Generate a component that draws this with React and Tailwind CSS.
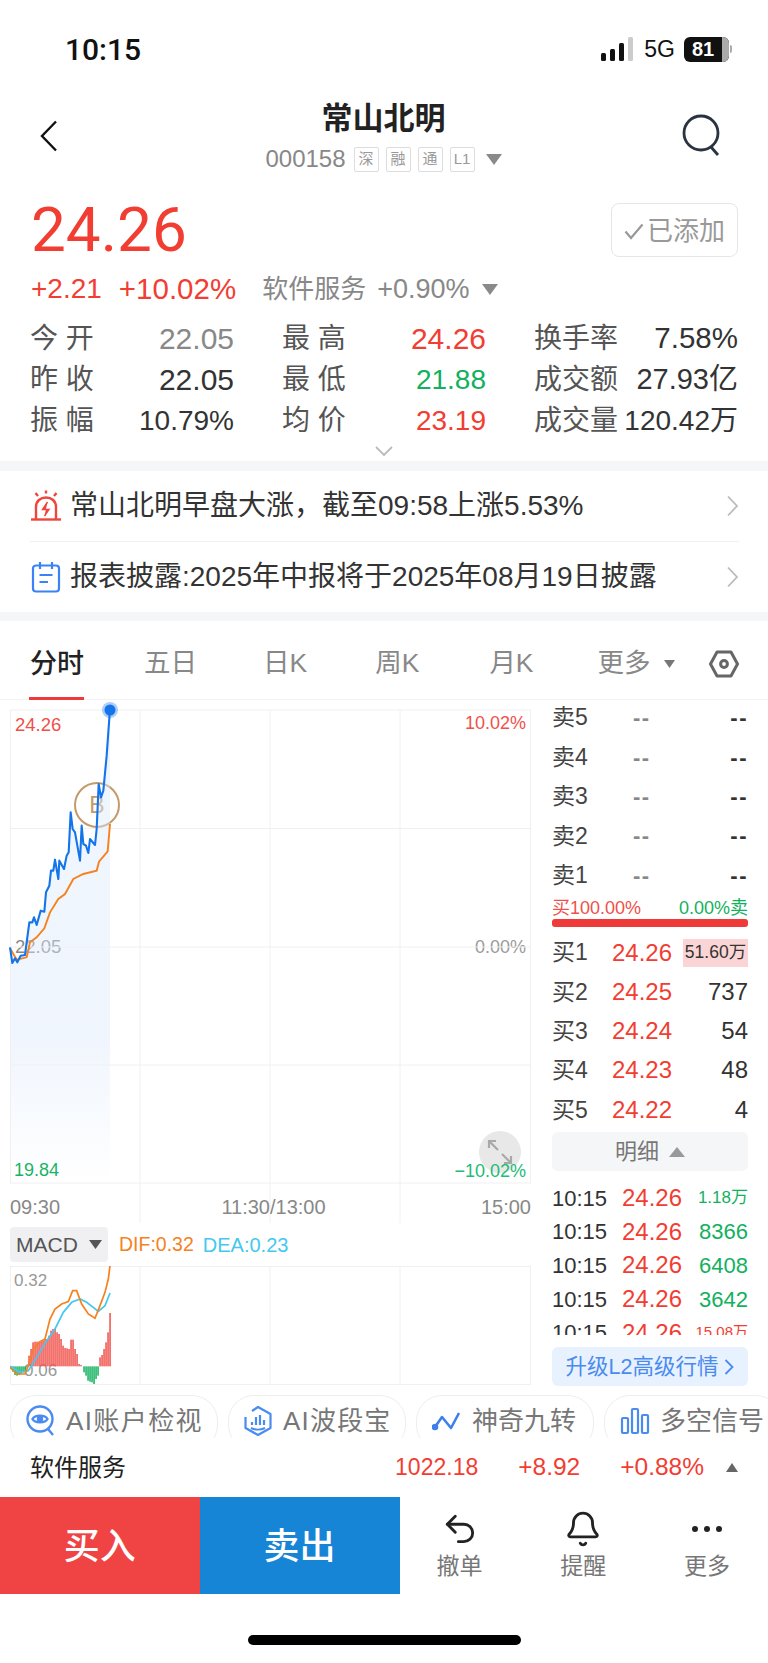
import { Undo2, Bell } from "lucide-react";

const RED = "text-[#f23d32]";
const GREEN = "text-[#12b15e]";

// chart points, read off the reference at 3x
const toPoints = (list, top) => list.map(([x, y]) => `${x / 3},${top + y / 3}`).join(" ");

const priceLine = [
    [30, 775], [37, 822], [45, 808], [52, 820], [62, 800], [75, 798], [88, 700], [97, 700], [102, 685], [110, 708],
    [122, 665], [133, 668], [138, 610], [148, 590], [153, 545], [160, 545], [165, 512], [175, 570], [178, 515],
    [192, 540], [200, 500], [206, 490], [212, 370], [218, 420], [225, 430], [240, 515], [245, 410], [250, 465],
    [258, 470], [265, 492], [270, 450], [285, 468], [290, 420], [296, 285], [303, 325], [310, 305], [320, 200], [330, 60],
];
const avgLine = [
    [30, 778], [50, 812], [80, 805], [90, 760], [110, 745], [133, 718], [150, 670], [175, 630], [195, 615],
    [220, 570], [250, 555], [290, 545], [297, 518], [323, 487], [330, 405],
];
const difLine = [
    [30, 655], [50, 675], [75, 675], [85, 650], [100, 600], [120, 578], [135, 570], [150, 510], [165, 480], [185, 465],
    [205, 458], [218, 425], [230, 425], [245, 465], [265, 495], [285, 508], [300, 470], [315, 430], [325, 390], [330, 350],
];
const deaLine = [
    [30, 652], [60, 670], [85, 665], [110, 625], [140, 575], [165, 540], [190, 490], [215, 460], [240, 450],
    [260, 460], [295, 487], [315, 470], [330, 432],
];
const macdBars = [
    [33, 660], [39, 668], [45, 678], [51, 680], [57, 678], [63, 675], [69, 670], [75, 665], [81, 655],
    [87, 620], [93, 600], [99, 580], [105, 578], [111, 578], [117, 578], [123, 578], [129, 575], [135, 570], [141, 570],
    [147, 560], [153, 545], [159, 540], [165, 538], [171, 550], [177, 555], [183, 570], [189, 590], [195, 597],
    [201, 598], [207, 600], [213, 572], [219, 572], [225, 600], [231, 615], [237, 645], [243, 648],
    [252, 670], [258, 680], [264, 695], [270, 698], [276, 700], [282, 705], [288, 690], [294, 680],
    [300, 625], [306, 618], [312, 600], [318, 580], [324, 550], [330, 492],
];

const stats = [
    ["今 开", "22.05", "text-[#888] text-[30px]"],
    ["最 高", "24.26", `${RED} text-[30px]`],
    ["换手率", "7.58%", "text-[#333] text-[29.5px]"],
    ["昨 收", "22.05", "text-[#333] text-[30px]"],
    ["最 低", "21.88", `${GREEN} text-[28px]`],
    ["成交额", "27.93亿", "text-[#333] text-[29px]"],
    ["振 幅", "10.79%", "text-[#333] text-[28px]"],
    ["均 价", "23.19", `${RED} text-[28px]`],
    ["成交量", "120.42万", "text-[#333] text-[28px]"],
];

const tabs = [
    { name: "五日", cls: "ml-[60px]" },
    { name: "日K", cls: "ml-[66px]" },
    { name: "周K", cls: "ml-[68px]" },
    { name: "月K", cls: "ml-[70px]" },
    { name: "更多", cls: "ml-[64px]" },
];

const sells = ["卖5", "卖4", "卖3", "卖2", "卖1"];
const buys = [
    ["买1", "24.26", "51.60万"],
    ["买2", "24.25", "737"],
    ["买3", "24.24", "54"],
    ["买4", "24.23", "48"],
    ["买5", "24.22", "4"],
];
const trades = [
    ["1.18万", GREEN, "text-[17px]"],
    ["8366", GREEN, "text-[22px]"],
    ["6408", GREEN, "text-[22px]"],
    ["3642", GREEN, "text-[22px]"],
    ["15.08万", RED, "text-[15px]"],
];

const ChevronRight = () => (
    <svg width="13" height="22" viewBox="0 0 13 22" fill="none" stroke="#bbb" strokeWidth="1.8">
        <path d="M2 1.5 L11 11 L2 20.5" />
    </svg>
);

const AlarmIcon = () => (
    <svg width="32" height="32" viewBox="0 0 32 32" fill="none" stroke="#f0453c" strokeWidth="2.4" className="shrink-0">
        <path d="M1 29.5 H31" />
        <path d="M6 29 V17 C6 11 10.5 7.5 16 7.5 C21.5 7.5 26 11 26 17 V29" />
        <path d="M17.5 12 L12.5 19.5 H19 L14.5 26" fill="#f0453c" strokeWidth="1.4" />
        <path d="M16 0.5 V3.5 M5.5 3 L8 6 M26.5 3 L24 6" />
    </svg>
);

const NoteIcon = () => (
    <svg width="32" height="32" viewBox="0 0 32 32" fill="none" stroke="#3b82f6" strokeWidth="2.2" className="shrink-0">
        <rect x="3" y="4.5" width="26" height="26" rx="3" />
        <path d="M10 1 V8 M22 1 V8" />
        <path d="M9.5 14 H22.5 M9.5 21 H18" />
    </svg>
);

const HexIcon = () => (
    <svg width="30" height="30" viewBox="0 0 30 30" fill="none" stroke="#666" strokeWidth="3">
        <path d="M8 3 H22 L28.5 15 L22 27 H8 L1.5 15 Z" strokeLinejoin="round" />
        <circle cx="15" cy="15" r="3.4" />
    </svg>
);

const EyeIcon = () => (
    <svg width="30" height="32" viewBox="0 0 30 32" fill="none" stroke="#4a8bf0" strokeWidth="2.4">
        <circle cx="14" cy="14" r="12.5" />
        <path d="M6.5 14 C9 9.5 19 9.5 21.5 14 C19 18.5 9 18.5 6.5 14 Z" />
        <circle cx="14" cy="14" r="2" fill="#4a8bf0" />
        <path d="M22 24 L27 30" />
    </svg>
);

const WaveIcon = () => (
    <svg width="30" height="32" viewBox="0 0 30 32" fill="none" stroke="#4a8bf0" strokeWidth="2.2">
        <path d="M9 6 L15 2 L27.5 9 V23 L15 30 L2.5 23 V12" strokeLinejoin="round" />
        <path d="M9 20 V17 M13 20 V12 M17 20 V10 M21 20 V15" />
        <path d="M8 23 C12 25 18 25 22 23" />
    </svg>
);

const TurnIcon = () => (
    <svg width="30" height="32" viewBox="0 0 30 32" fill="none" stroke="#3f7fea" strokeWidth="2.6">
        <path d="M3 22 L10 12 L19 23 L27 8" strokeLinejoin="round" />
        <circle cx="3" cy="22" r="2" fill="#3f7fea" />
    </svg>
);

const SignalIcon = () => (
    <svg width="30" height="32" viewBox="0 0 30 32" fill="none" stroke="#4a8bf0" strokeWidth="2.2">
        <rect x="2" y="13" width="6" height="15" rx="1" />
        <rect x="12" y="4" width="6" height="24" rx="1" />
        <rect x="22" y="10" width="6" height="18" rx="1" />
    </svg>
);

const pills = [
    { icon: EyeIcon, text: "AI账户检视", cls: "w-[208px] pl-[15px]", spacing: "tracking-[1.4px]" },
    { icon: WaveIcon, text: "AI波段宝", cls: "w-[178px] pl-[14px]", spacing: "tracking-[1.2px]" },
    { icon: TurnIcon, text: "神奇九转", cls: "w-[178px] pl-[15px]", spacing: "" },
    { icon: SignalIcon, text: "多空信号", cls: "w-[178px] pl-[15px]", spacing: "" },
];

const TimeChart = () => (
    <div className="relative w-[521px] h-[513px]">
        <span className="absolute left-[5px] top-[5px] text-[18.5px] leading-[20px] text-[#f0504a]">24.26</span>
        <span className="absolute right-[5px] top-[3px] text-[18px] leading-[20px] text-[#f0504a]">10.02%</span>
        <span className="absolute left-[5px] top-[227px] text-[18.5px] leading-[20px] text-[#888]">22.05</span>
        <span className="absolute right-[5px] top-[227px] text-[18px] leading-[20px] text-[#999]">0.00%</span>
        <span className="absolute left-[4px] top-[450px] text-[18px] leading-[20px] text-[#12b15e]">19.84</span>
        <div className="absolute left-[64px] top-[72px] w-[46px] h-[46px] rounded-full border-2 border-[#c49a6c] flex items-center justify-center text-[23px] text-[#c49a6c]">
            B
        </div>
        <svg width="521" height="513" viewBox="10 711 521 513" className="absolute left-0 top-0 overflow-visible">
            <defs>
                <linearGradient id="areaFill" x1="0" y1="0" x2="0" y2="1">
                    <stop offset="0" stopColor="#dce9fc" stopOpacity="0.45" />
                    <stop offset="0.7" stopColor="#dce9fc" stopOpacity="0.42" />
                    <stop offset="1" stopColor="#dce9fc" stopOpacity="0" />
                </linearGradient>
            </defs>
            <path d={`M${toPoints(priceLine, 690).replaceAll(" ", " L")} L110,1184 L10,1184 Z`} fill="url(#areaFill)" />
            {[711, 829.5, 948, 1066, 1184].map((y) => (
                <line key={y} x1="10" x2="531" y1={y} y2={y} stroke="#f0f0f0" />
            ))}
            {[10.5, 140, 270, 400, 530.5].map((x, i) => (
                <line key={x} x1={x} x2={x} y1="711" y2={i === 0 || i === 4 ? 1184 : 1224} stroke="#f0f0f0" />
            ))}
            <polyline points={toPoints(avgLine, 690)} fill="none" stroke="#f5821f" strokeWidth="1.9" />
            <polyline points={toPoints(priceLine, 690)} fill="none" stroke="#1474ea" strokeWidth="2.1" strokeLinejoin="round" />
            <circle cx="110" cy="711" r="8" fill="#1474ea" fillOpacity="0.35" />
            <circle cx="110" cy="711" r="5.5" fill="#1474ea" />
        </svg>
        {/* expand button */}
        <div className="absolute left-[469px] top-[421px] w-[42px] h-[42px] rounded-full bg-[#e8e8e8] flex items-center justify-center">
            <svg width="26" height="26" viewBox="0 0 26 26" fill="none" stroke="#a8a8a8" strokeWidth="2.2">
                <path d="M2 9 V2 H9 M2 2 L11 11 M24 17 V24 H17 M24 24 L15 15" />
            </svg>
        </div>
        <span className="absolute right-[5px] top-[451px] text-[18px] leading-[20px] text-[#22bb77]">−10.02%</span>
        <div className="absolute left-0 right-0 top-[485px] flex justify-between text-[20px] leading-[24px] text-[#888]">
            <span>09:30</span>
            <span className="ml-[6px]">11:30/13:00</span>
            <span>15:00</span>
        </div>
    </div>
);

const MacdChart = () => (
    <div className="relative w-[521px] h-[119px]">
        <span className="absolute left-[4px] top-[5px] text-[17px] leading-[20px] text-[#999]">0.32</span>
        <span className="absolute left-[14px] top-[95px] text-[17px] leading-[20px] text-[#999]">0.06</span>
        <svg width="521" height="119" viewBox="10 1267 521 119" className="absolute left-0 top-0 overflow-hidden">
            {[1267.5, 1385.5].map((y) => (
                <line key={y} x1="10" x2="531" y1={y} y2={y} stroke="#f0f0f0" />
            ))}
            {[10.5, 140, 270, 400, 530.5].map((x) => (
                <line key={x} x1={x} x2={x} y1="1267" y2="1386" stroke="#f0f0f0" />
            ))}
            {macdBars.map(([x, y]) => {
                const up = y < 652;
                const top = 1150 + Math.min(y, 652) / 3;
                const h = Math.abs(y - 652) / 3;
                return <rect key={x} x={x / 3 - 0.7} y={top} width="1.5" height={h} fill={up ? "#f0504a" : "#12b15e"} />;
            })}
            <polyline points={toPoints(deaLine, 1150)} fill="none" stroke="#45c8f0" strokeWidth="1.7" />
            <polyline points={toPoints(difLine, 1150)} fill="none" stroke="#f5821f" strokeWidth="1.7" />
        </svg>
    </div>
);

const OrderBook = () => (
    <div className="w-[196px] ml-[21px] -mt-[2px] self-start flex flex-col">
        {sells.map((label) => (
            <div key={label} className="h-[39.4px] flex items-center justify-between text-[23px] text-[#444]">
                <span className="w-[60px]">{label}</span>
                <span className="flex-1 pl-[21px] text-[#888] text-[22px] font-bold tracking-[1.5px]">--</span>
                <span className="text-[22px] font-bold text-[#333] tracking-[1.5px]">--</span>
            </div>
        ))}
        <div className="h-[20px] mt-[3px] flex items-center justify-between text-[18px] leading-[20px]">
            <span className="text-[#f0504a]">买100.00%</span>
            <span className={GREEN}>0.00%卖</span>
        </div>
        <div className="h-[8px] mt-[1px] rounded-[3px] bg-[#ee3a38]" />
        <div className="h-[6px]" />
        {buys.map(([label, price, qty], i) => (
            <div key={label} className="h-[39.3px] flex items-center text-[#444]">
                <span className="w-[60px] text-[23px]">{label}</span>
                <span className={`text-[24px] ${RED}`}>{price}</span>
                {i === 0 ? (
                    <span className="ml-auto w-[65px] h-[28px] flex items-center justify-center bg-[#fbd5d5] text-[17.5px] text-[#333]">
                        {qty}
                    </span>
                ) : (
                    <span className="ml-auto text-[24px] text-[#333]">{qty}</span>
                )}
            </div>
        ))}
        <div className="h-[39px] mt-[3px] rounded-[6px] bg-[#f5f6f8] flex items-center justify-center gap-[10px] text-[22px] text-[#777]">
            明细
            <svg width="16" height="10" viewBox="0 0 16 10" fill="#999">
                <path d="M8 0 L16 10 H0 Z" />
            </svg>
        </div>
        <div className="h-[154px] mt-[10px] overflow-hidden flex flex-col">
            {trades.map(([qty, color, size], i) => (
                <div key={i} className="h-[33.6px] shrink-0 flex items-center">
                    <span className="w-[70px] text-[22px] text-[#333]">10:15</span>
                    <span className={`text-[24px] ${RED}`}>24.26</span>
                    <span className={`ml-auto ${size} ${color}`}>{qty}</span>
                </div>
            ))}
        </div>
        <div className="h-[39px] mt-[12px] rounded-[6px] bg-[#e8f1fe] flex items-center justify-center gap-[6px] text-[21.5px] text-[#4a8bf0]">
            升级L2高级行情
            <svg width="10" height="16" viewBox="0 0 10 16" fill="none" stroke="#4a8bf0" strokeWidth="1.8">
                <path d="M1.5 1 L8.5 8 L1.5 15" />
            </svg>
        </div>
    </div>
);

const App = () => {
    return (
        <div className="w-[768px] h-[1663px] overflow-hidden bg-white [font-family:'Liberation_Sans','Noto_Sans_CJK_SC',sans-serif]">
            {/* Status bar */}
            <div className="h-[98px] pl-[65px] pr-[36px] flex items-center justify-between">
                <span className="text-[30px] font-medium text-[#111] [font-family:Roboto,sans-serif]">10:15</span>
                <div className="flex items-center gap-[9px]">
                    <svg width="34" height="24" viewBox="0 0 34 24">
                        <rect x="0" y="16" width="5" height="8" rx="1.5" fill="#111" />
                        <rect x="9" y="12" width="5" height="12" rx="1.5" fill="#111" />
                        <rect x="18" y="6" width="5" height="18" rx="1.5" fill="#111" />
                        <rect x="27" y="0" width="5" height="24" rx="1.5" fill="#ccc" />
                    </svg>
                    <span className="text-[23px] font-medium text-[#111]">5G</span>
                    <div className="flex items-center gap-[1px]">
                        <div className="relative flex items-center w-[45px] h-[25px] rounded-[6px] bg-[#111] overflow-hidden">
                            <span className="pl-[8px] text-[20px] font-bold leading-none text-white">81</span>
                            <div className="absolute right-0 top-0 h-full w-[7px] bg-[#aaa]" />
                        </div>
                        <div className="w-[2px] h-[8px] rounded-r-[2px] bg-[#aaa]" />
                    </div>
                </div>
            </div>

            {/* Nav */}
            <div className="h-[86px] pl-[40px] pr-[41px] grid grid-cols-[1fr_auto_1fr] items-start">
                <svg width="18" height="32" viewBox="0 0 18 32" fill="none" stroke="#111" strokeWidth="2.4" className="mt-[22px]">
                    <path d="M16 1.5 L2 16 L16 30.5" />
                </svg>
                <div className="flex flex-col items-center">
                    <span className="h-[40px] leading-[42px] text-[31px] font-bold text-[#222]">常山北明</span>
                    <div className="h-[42px] flex items-center text-[#888]">
                        <span className="text-[24px] mr-[8px]">000158</span>
                        {["深", "融", "通", "L1"].map((tag) => (
                            <span
                                key={tag}
                                className="w-[25px] h-[25px] mr-[7px] flex items-center justify-center rounded-[2px] border border-[#ddd] text-[15px] text-[#999]"
                            >
                                {tag}
                            </span>
                        ))}
                        <svg width="16" height="11" viewBox="0 0 16 11" fill="#8a8a8a" className="ml-[4px]">
                            <path d="M0 0 H16 L8 11 Z" />
                        </svg>
                    </div>
                </div>
                <svg width="40" height="42" viewBox="0 0 40 42" fill="none" stroke="#2a3340" strokeWidth="2.8" className="mt-[16px] mr-[6px] justify-self-end">
                    <circle cx="20" cy="19" r="17" />
                    <path d="M30 33 L37 41" />
                </svg>
            </div>

            {/* Quote */}
            <div className="h-[92px] pl-[31px] pr-[30px] flex items-center justify-between">
                <span className={`text-[62px] leading-none [font-family:Roboto,sans-serif] ${RED}`}>24.26</span>
                <div className="w-[127px] h-[54px] rounded-[8px] border border-[#e6e6e6] flex items-center justify-center gap-[3px] pt-[2px] text-[26px] text-[#999]">
                    <svg width="20" height="17" viewBox="0 0 20 17" fill="none" stroke="#999" strokeWidth="2.2">
                        <path d="M1.5 8.5 L7 15 L18.5 1.5" />
                    </svg>
                    已添加
                </div>
            </div>
            <div className="h-[26px] pl-[31px] flex items-center text-[#888]">
                <span className={`text-[28px] ${RED}`}>+2.21</span>
                <span className={`ml-[17px] text-[29.5px] ${RED}`}>+10.02%</span>
                <span className="ml-[26px] text-[26px]">软件服务</span>
                <span className="ml-[11px] text-[27px]">+0.90%</span>
                <svg width="16" height="11" viewBox="0 0 16 11" fill="#8a8a8a" className="ml-[13px]">
                    <path d="M0 0 H16 L8 11 Z" />
                </svg>
            </div>

            {/* Stats */}
            <div className="mt-[16px] px-[30px] grid grid-cols-3 gap-x-[48px]">
                {stats.map(([label, value, cls]) => (
                    <div key={label} className="h-[41px] flex items-center justify-between">
                        <span className="text-[28px] text-[#555]">{label}</span>
                        <span className={cls}>{value}</span>
                    </div>
                ))}
            </div>
            <div className="h-[20px] flex items-center justify-center">
                <svg width="18" height="10" viewBox="0 0 18 10" fill="none" stroke="#bbb" strokeWidth="1.8">
                    <path d="M1 1 L9 9 L17 1" />
                </svg>
            </div>
            <div className="h-[10px] bg-[#f5f6f8]" />

            {/* Notices */}
            <div className="pl-[30px] pr-[29px]">
                <div className="h-[71px] flex items-center border-b border-[#f0f0f0]">
                    <AlarmIcon />
                    <span className="ml-[8px] flex-1 text-[28px] text-[#333]">常山北明早盘大涨，截至09:58上涨5.53%</span>
                    <ChevronRight />
                </div>
                <div className="h-[70px] flex items-center">
                    <NoteIcon />
                    <span className="ml-[8px] flex-1 text-[28px] text-[#333]">报表披露:2025年中报将于2025年08月19日披露</span>
                    <ChevronRight />
                </div>
            </div>
            <div className="h-[9px] bg-[#f5f6f8]" />

            {/* Tabs */}
            <div className="relative h-[79px] pl-[30px] pt-[8px] flex items-center border-b border-[#f2f2f2]">
                <span className="text-[27px] font-medium text-[#222]">分时</span>
                <div className="absolute left-[29px] bottom-[-1px] w-[55px] h-[3px] bg-[#ee3a38]" />
                {tabs.map((tab) => (
                    <span key={tab.name} className={`${tab.cls} text-[26.5px] text-[#888]`}>
                        {tab.name}
                    </span>
                ))}
                <svg width="11" height="8" viewBox="0 0 11 8" fill="#777" className="ml-[13px]">
                    <path d="M0 0 H11 L5.5 8 Z" />
                </svg>
                <div className="ml-[34px]">
                    <HexIcon />
                </div>
            </div>

            {/* Chart + order book */}
            <div className="h-[685px] flex pl-[10px]">
                <div className="w-[521px] pt-[10px] flex flex-col">
                    <TimeChart />
                    <div className="h-[4px]" />
                    <div className="h-[35px] flex items-center gap-[11px]">
                        <div className="w-[98px] h-[35px] rounded-[4px] bg-[#f0f0f2] pl-[6px] pr-[6px] flex items-center justify-between text-[21px] text-[#555]">
                            MACD
                            <svg width="13" height="9" viewBox="0 0 13 9" fill="#555">
                                <path d="M0 0 H13 L6.5 9 Z" />
                            </svg>
                        </div>
                        <span className="text-[19.5px] text-[#f5821f]">DIF:0.32</span>
                        <span className="-ml-[2px] text-[20px] text-[#45c8f0]">DEA:0.23</span>
                    </div>
                    <div className="h-[4px]" />
                    <MacdChart />
                </div>
                <OrderBook />
            </div>

            {/* Feature pills */}
            <div className="mt-[10px] h-[43px] pl-[10px] overflow-hidden flex gap-[10px]">
                {pills.map((pill) => (
                    <div
                        key={pill.text}
                        className={`${pill.cls} shrink-0 h-[56px] rounded-[26px] border border-[#eeeeee] flex items-start pt-[9px] gap-[10px] text-[26px] leading-[32px] text-[#777]`}
                    >
                        <pill.icon />
                        <span className={`whitespace-nowrap ${pill.spacing}`}>{pill.text}</span>
                    </div>
                ))}
            </div>

            {/* Sector row */}
            <div className={`h-[59px] pl-[30px] pr-[30px] flex items-center text-[24.5px] ${RED}`}>
                <span className="text-[#222] text-[24px] mr-auto">软件服务</span>
                <span className="text-[23px]">1022.18</span>
                <span className="ml-[40px]">+8.92</span>
                <span className="ml-[40px]">+0.88%</span>
                <svg width="12" height="9" viewBox="0 0 12 9" fill="#666" className="ml-[22px]">
                    <path d="M6 0 L12 9 H0 Z" />
                </svg>
            </div>

            {/* Bottom actions */}
            <div className="h-[97px] flex">
                <div className="w-[199.5px] pt-[2px] bg-[#f04444] flex items-center justify-center text-[36px] font-medium text-white">买入</div>
                <div className="w-[200px] pt-[2px] bg-[#1785d6] flex items-center justify-center text-[36px] font-medium text-white">卖出</div>
                <div className="flex-1 pl-[29px] pr-[30px] flex justify-between items-start pt-[13px] text-[23px] text-[#777]">
                    <div className="w-[62px] flex flex-col items-center">
                        <Undo2 size={38} strokeWidth={1.8} color="#222" />
                        <span className="mt-[2px] leading-[32px]">撤单</span>
                    </div>
                    <div className="w-[62px] flex flex-col items-center">
                        <Bell size={38} strokeWidth={1.8} color="#222" />
                        <span className="mt-[2px] leading-[32px]">提醒</span>
                    </div>
                    <div className="w-[62px] flex flex-col items-center">
                        <svg width="38" height="38" viewBox="0 0 38 38" fill="#222">
                            <circle cx="7" cy="19" r="3" />
                            <circle cx="19" cy="19" r="3" />
                            <circle cx="31" cy="19" r="3" />
                        </svg>
                        <span className="mt-[2px] leading-[32px]">更多</span>
                    </div>
                </div>
            </div>

            {/* Home indicator */}
            <div className="mt-[41px] ml-[248px] w-[273px] h-[10px] rounded-full bg-black" />
        </div>
    );
};

export default App;
